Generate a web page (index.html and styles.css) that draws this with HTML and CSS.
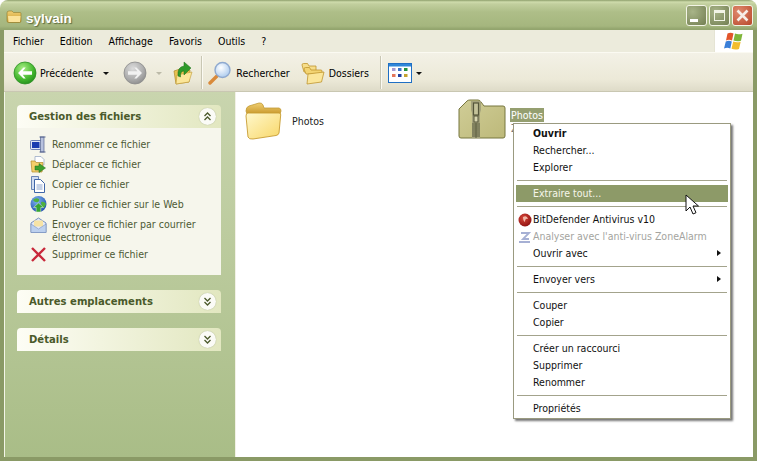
FILE: index.html
```html
<!DOCTYPE html>
<html lang="fr">
<head>
<meta charset="utf-8">
<title>sylvain</title>
<link rel="stylesheet" href="styles.css">
</head>
<body>
<svg class="defs" width="0" height="0" aria-hidden="true">
  <defs>
    <linearGradient id="fold" x1="0" y1="0" x2="1" y2="1"><stop offset="0" stop-color="#fff8cc"/><stop offset="1" stop-color="#f8d768"/></linearGradient>
    <linearGradient id="foldb" x1="0" y1="0" x2="0" y2="1"><stop offset="0" stop-color="#f0cf72"/><stop offset="1" stop-color="#c9992c"/></linearGradient>
    <linearGradient id="zipf" x1="0" y1="0" x2="1" y2="1"><stop offset="0" stop-color="#d0cd97"/><stop offset="1" stop-color="#bdb97a"/></linearGradient>
    <radialGradient id="gbtn" cx=".4" cy=".3" r=".8"><stop offset="0" stop-color="#a8ee84"/><stop offset=".6" stop-color="#45b82f"/><stop offset="1" stop-color="#1c8518"/></radialGradient>
    <radialGradient id="gray" cx=".4" cy=".3" r=".8"><stop offset="0" stop-color="#dcdcdc"/><stop offset=".6" stop-color="#adadad"/><stop offset="1" stop-color="#858585"/></radialGradient>
    <radialGradient id="lens" cx=".4" cy=".35" r=".7"><stop offset="0" stop-color="#ffffff"/><stop offset="1" stop-color="#a9c9ee"/></radialGradient>
    <radialGradient id="globe" cx=".4" cy=".3" r=".8"><stop offset="0" stop-color="#7fb4f0"/><stop offset="1" stop-color="#1746a8"/></radialGradient>
    <radialGradient id="bd" cx=".4" cy=".35" r=".7"><stop offset="0" stop-color="#d8473a"/><stop offset="1" stop-color="#8c0f0f"/></radialGradient>
  </defs>
</svg>
<div class="window">
  <header class="titlebar">
    <svg class="title-icon" width="16" height="14" viewBox="0 0 16 14"><path d="M1 3q0-2 2-2h3l1.500 1.500H14q1 0 1 1V11q0 1.500-1.500 1.500H3Q1 12.500 1 11z" fill="url(#foldb)" stroke="#8f7a2c" stroke-width=".6"/><path d="M2 6h12.500L14 12H2.500z" fill="#fbe39a"/></svg>
    <span class="title-text">sylvain</span>
    <div class="caption-buttons">
      <span class="cap-btn"><i class="cap-min"></i></span>
      <span class="cap-btn"><i class="cap-max"></i></span>
      <span class="cap-btn cap-close"><svg width="15" height="15" viewBox="0 0 15 15"><path d="M2.500 2.500l10 10M12.500 2.500l-10 10" stroke="#f6eee6" stroke-width="2.600" fill="none"/></svg></span>
    </div>
  </header>
  <div class="frame">
    <nav class="menubar">
      <span>Fichier</span><span>Edition</span><span>Affichage</span><span>Favoris</span><span>Outils</span><span>?</span>
      <div class="logo-box">
        <svg width="22" height="20" viewBox="0 0 22 20"><path d="M4.500 2.500q3-1.500 6 0L9 9.500q-3-1.500-6 0z" fill="#e2552b"/><path d="M12 2.500q3 1.500 7.500.3L18 9.800q-4 1.200-7.500-.3z" fill="#7fb63a"/><path d="M2.800 10.500q3-1.500 6 0L7.300 17.500q-3-1.500-6.300 0z" fill="#3a7fd8"/><path d="M10.200 10.500q3.500 1.500 7.500.3L16 18q-4 1.200-7.500-.3z" fill="#f3bd2e"/></svg>
      </div>
    </nav>
    <div class="toolbar">
      <span class="tool tool-back">
        <svg width="24" height="24" viewBox="0 0 24 24"><circle cx="12" cy="12" r="11" fill="url(#gbtn)" stroke="#2d8f24" stroke-width=".8"/><path d="M5 12l5.500-5.500 2.200 0-3 3.700H19v3.600H9.700l3 3.700-2.200 0z" fill="#fff"/></svg>
        <span>Précédente</span>
        <i class="caret"></i>
      </span>
      <span class="tool tool-fwd">
        <svg width="24" height="24" viewBox="0 0 24 24"><circle cx="12" cy="12" r="11" fill="url(#gray)" stroke="#8a8a8a" stroke-width=".8"/><path d="M19 12l-5.500-5.500-2.200 0 3 3.700H5v3.600h9.300l-3 3.700 2.200 0z" fill="#f2f2f2"/></svg>
        <i class="caret caret-off"></i>
      </span>
      <span class="tool tool-up">
        <svg width="20" height="24" viewBox="0 0 20 24"><path d="M1 10l6-2v2l10-1-1 12-13 2z" fill="#e9c150" stroke="#b08a2a" stroke-width=".7"/><path d="M4 14l15-3-3 10-13 2z" fill="#fbe69a" stroke="#c09a35" stroke-width=".6"/><path d="M5 15Q4 6 11 5V1l7 6-7 7v-4q-4 0-3.500 6z" fill="#2f9a2a" stroke="#1f6f1a" stroke-width=".5"/></svg>
      </span>
      <i class="tool-sep"></i>
      <span class="tool tool-search">
        <svg width="24" height="24" viewBox="0 0 24 24"><path d="M9.500 14.500L2 22" stroke="#d98a3a" stroke-width="3.400" stroke-linecap="round"/><circle cx="14.500" cy="9" r="7.500" fill="url(#lens)" stroke="#8fa9cf" stroke-width="1.400"/></svg>
        <span>Rechercher</span>
      </span>
      <span class="tool tool-folders">
        <svg width="24" height="23" viewBox="0 0 24 23"><path d="M1 3q0-1.500 1.500-1.500h4L8 4h7v6H3z" fill="#f6dd8a" stroke="#bf962e" stroke-width=".8"/><path d="M3 7q0-1.500 1.500-1.500h4L10 8h10q1 0 1 1v3H5z" fill="#f3d472" stroke="#bf962e" stroke-width=".8"/><path d="M7 12l16-2-2.500 10L6 22z" fill="#fbe69a" stroke="#bf962e" stroke-width=".8"/></svg>
        <span>Dossiers</span>
      </span>
      <i class="tool-sep tool-sep-2"></i>
      <span class="tool tool-views">
        <svg width="24" height="20" viewBox="0 0 24 20"><rect x=".5" y=".5" width="23" height="19" fill="#fff" stroke="#1f6fc4"/><rect x="1" y="1" width="22" height="2.500" fill="#2f86d8"/><g><rect x="4" y="5" width="3.500" height="3" fill="#a79ad0"/><rect x="10" y="5" width="3.500" height="3" fill="#3d74c8"/><rect x="16" y="5" width="3.500" height="3" fill="#22923a"/><rect x="4" y="11" width="3.500" height="3" fill="#e4775a"/><rect x="10" y="11" width="3.500" height="3" fill="#1f3fa0"/><rect x="16" y="11" width="3.500" height="3" fill="#c6a32f"/></g></svg>
        <i class="caret"></i>
      </span>
    </div>
    <div class="main">
      <aside class="sidebar">
        <section class="panel">
          <div class="panel-head"><h2>Gestion des fichiers</h2><span class="chev"><svg width="9" height="9" viewBox="0 0 9 9"><path d="M1.500 4l3-3 3 3M1.500 8l3-3 3 3" fill="none" stroke="#4c5a2c" stroke-width="1.300"/></svg></span></div>
          <ul class="panel-body">
            <li><svg width="17" height="17" viewBox="0 0 17 17"><rect x=".5" y="4.500" width="13" height="9" rx="1" fill="#dfe6f4" stroke="#6a7fb5"/><rect x="2" y="6" width="7.500" height="6" fill="#1a3db0"/><rect x="10.500" y="1" width="3.500" height="15" fill="#b8c2de" stroke="#56658f" stroke-width=".7"/><path d="M9.500 1h6M9.500 16h6" stroke="#56658f" stroke-width="1.200"/></svg><span>Renommer ce fichier</span></li>
            <li><svg width="17" height="17" viewBox="0 0 17 17"><path d="M5 .5h6l3 3V9H5z" fill="#fff" stroke="#8ea0c0" stroke-width=".7"/><path d="M1 5h4l1 1.500h7L12 16H2z" fill="#f4cf6a" stroke="#b08a2a" stroke-width=".7"/><path d="M5 10h4V7.500l6.500 4.500L9 16.500V14H5z" fill="#3ea02e" stroke="#1f6f1a" stroke-width=".5"/></svg><span>Déplacer ce fichier</span></li>
            <li><svg width="17" height="17" viewBox="0 0 17 17"><path d="M1.500 .5h7v13h-7z" fill="#cfdcf0" stroke="#6b86b5"/><path d="M4.500 3.500h6l4 4v9h-10z" fill="#fff" stroke="#3f66a8"/><path d="M6.500 9h6M6.500 11h6M6.500 13h6" stroke="#8aa3cc"/></svg><span>Copier ce fichier</span></li>
            <li><svg width="17" height="17" viewBox="0 0 17 17"><circle cx="8.500" cy="8" r="8" fill="url(#globe)"/><path d="M3 4q3-3 6-1 1 2-1 3-3 1-5-2zM11 6q3-1 5 2-1 3-3 4-2-2-2-6z" fill="#4fb03f"/><path d="M8.500 7l5 4.500h-2.700V16H6.200v-4.500H3.500z" fill="#36a532" stroke="#e8f4e0" stroke-width=".5"/></svg><span>Publier ce fichier sur le Web</span></li>
            <li class="li-wrap"><svg width="17" height="17" viewBox="0 0 17 17"><path d="M1 6l7.500-5L16 6v9.500H1z" fill="#e3e9f6" stroke="#7890bd"/><path d="M4 3.500h9v6H4z" fill="#f6e3a5"/><path d="M1 7l7.500 5L16 7v8.500H1z" fill="#bcd0ee" stroke="#7890bd" stroke-width=".6"/></svg><span>Envoyer ce fichier par courrier électronique</span></li>
            <li><svg width="17" height="17" viewBox="0 0 17 17"><path d="M2 2l13 13M15 2L2 15" stroke="#c8283a" stroke-width="2.400" fill="none"/></svg><span>Supprimer ce fichier</span></li>
          </ul>
        </section>
        <section class="panel">
          <div class="panel-head"><h2>Autres emplacements</h2><span class="chev"><svg width="9" height="9" viewBox="0 0 9 9"><path d="M1.500 1l3 3 3-3M1.500 5l3 3 3-3" fill="none" stroke="#4c5a2c" stroke-width="1.300"/></svg></span></div>
        </section>
        <section class="panel">
          <div class="panel-head"><h2>Détails</h2><span class="chev"><svg width="9" height="9" viewBox="0 0 9 9"><path d="M1.500 1l3 3 3-3M1.500 5l3 3 3-3" fill="none" stroke="#4c5a2c" stroke-width="1.300"/></svg></span></div>
        </section>
      </aside>
      <section class="files">
        <div class="file">
          <svg width="38" height="38" viewBox="0 0 38 38"><path d="M1 9q0-4 3-5l10-3q3-.5 4 2l1 3 15 0q2 .3 2 3l-1 3H2z" fill="url(#foldb)" stroke="#c29a35" stroke-width=".8"/><path d="M3 11h31q2 0 1.700 2L34 31q-.4 2-3 2.500L8 37q-4 .5-5-2L1 14q0-3 2-3z" fill="url(#fold)" stroke="#c79c32" stroke-width=".9"/></svg>
          <span class="file-name">Photos</span>
        </div>
        <div class="file file-zip">
          <svg width="48" height="41" viewBox="0 0 48 41"><path d="M1 10l8-8q1-1 3-1h8q2 0 3 2l3 4h19q2 0 2 2v28q0 2-2 2H3q-2 0-2-2z" fill="url(#zipf)" stroke="#77763f"/><path d="M13 2h10v9l-1 3v25h-8V14l-1-3z" fill="#a5a37c"/><rect x="15.500" y="4" width="5" height="12" fill="#c4c29a" stroke="#55553a" stroke-width="1.200"/><rect x="16" y="17" width="4" height="6" fill="#d8d6b0" stroke="#55553a"/><path d="M14 25h8M14 27h8M14 29h8M14 31h8M14 33h8M14 35h8M14 37h8" stroke="#5f6043"/><path d="M18 24v15" stroke="#5f6043"/></svg>
          <div class="zip-label">
            <span class="file-name file-selected">Photos</span>
            <span class="file-type">Zip</span>
          </div>
        </div>
        <ul class="context-menu">
          <li class="cm-bold">Ouvrir</li>
          <li>Rechercher...</li>
          <li>Explorer</li>
          <li class="cm-sep"></li>
          <li class="cm-hi">Extraire tout...</li>
          <li class="cm-sep"></li>
          <li class="cm-ic"><svg width="14" height="14" viewBox="0 0 14 14"><circle cx="7" cy="7" r="6.500" fill="url(#bd)"/><path d="M5 4q4-2 5 2-3-1-3 3-2-1-2-5z" fill="#f0b8a8"/></svg>BitDefender Antivirus v10</li>
          <li class="cm-ic cm-dis"><svg width="14" height="14" viewBox="0 0 14 14"><path d="M3 3h8L5 9h6M1 12h11" fill="none" stroke="#a6b0d4" stroke-width="1.800"/></svg>Analyser avec l'anti-virus ZoneAlarm</li>
          <li class="cm-sub">Ouvrir avec</li>
          <li class="cm-sep"></li>
          <li class="cm-sub">Envoyer vers</li>
          <li class="cm-sep"></li>
          <li>Couper</li>
          <li>Copier</li>
          <li class="cm-sep"></li>
          <li>Créer un raccourci</li>
          <li>Supprimer</li>
          <li>Renommer</li>
          <li class="cm-sep"></li>
          <li>Propriétés</li>
        </ul>
        <svg class="cursor" width="14" height="22" viewBox="0 0 14 22"><path d="M1 1v16l4-4 3 7 3-1.300-3-6.700h5.500z" fill="#fff" stroke="#111" stroke-width="1"/></svg>
      </section>
    </div>
  </div>
</div>
</body>
</html>
```

FILE: styles.css
```css
* { box-sizing: border-box; }
html, body { margin: 0; padding: 0; background: #fff; }
body { font: 10.5px/13px "DejaVu Sans Condensed", "Liberation Sans", sans-serif; color: #000; overflow: hidden; }
.defs { position: absolute; }
ul { list-style: none; margin: 0; padding: 0; }

.window { width: 757px; height: 461px; display: flex; flex-direction: column; }
.titlebar {
  height: 30px; flex: none; display: flex; align-items: center; padding: 2px 4px 0 6px;
  border-radius: 8px 8px 0 0;
  background: linear-gradient(#8e9f6c 0, #cfdcac 2px, #c2cf9e 4px, #aebe88 12px, #a5b67e 26px, #93a56e 29px);
}
.title-icon { margin: 2px 4px 0 0; }
.title-text { font: bold 13.500px/16px "Liberation Sans", sans-serif; color: #fff; text-shadow: 1px 1px 1px #5d6b3e; margin-top: 5px; }
.caption-buttons { margin-left: auto; display: flex; gap: 2px; margin-top: -1px; }
.cap-btn {
  width: 21px; height: 21px; border: 1px solid #f2f4e6; border-radius: 3px;
  background: radial-gradient(circle at 30% 30%, #a8b488, #737f52);
  display: flex; align-items: center; justify-content: center; position: relative;
}
.cap-min { width: 8px; height: 3px; background: #fff; align-self: flex-end; margin: 0 6px 3px 0; }
.cap-max { width: 11px; height: 11px; border: 1px solid #f2f4e6; border-top-width: 3px; }
.cap-close { background: radial-gradient(circle at 30% 30%, #e08a6e, #b8482a); }

.frame {
  flex: 1; min-height: 0; display: flex; flex-direction: column;
  border: solid #8a9a66; border-width: 0 4px 4px;
  background: #ecebdc;
}
.menubar {
  height: 23px; flex: none; display: flex; align-items: center; gap: 16px; padding-left: 9px;
  background: #ecebdc; border-bottom: 1px solid #fbfaf2; position: relative;
}
.logo-box {
  position: absolute; right: 0; top: 0; width: 39px; height: 22px; background: #fff;
  display: flex; align-items: center; justify-content: center; border-left: 1px solid #e5e4d4;
}
.toolbar {
  height: 39px; flex: none; display: flex; align-items: center; padding: 2px 0 0 9px;
  background: linear-gradient(#f3f1e6, #ece9d8 70%, #dedbc8);
  border-bottom: 1px solid #c9c7b2;
}
.tool { display: flex; align-items: center; }
.tool-back span { margin-left: 3px; }
.caret { width: 0; height: 0; border: solid transparent; border-width: 3px 3px 0; border-top-color: #111; }
.tool-back .caret { margin-left: 10px; }
.tool-fwd { margin-left: 14px; }
.tool-fwd .caret { margin-left: 9px; }
.caret-off { border-top-color: #bcbaa8; }
.tool-up { margin-left: 11px; }
.tool-sep { width: 1px; height: 33px; margin: -2px 6px 0 8px; background: #c9c7b4; box-shadow: 1px 0 #fbfaf3; }
.tool-search span { margin-left: 4px; }
.tool-folders { margin-left: 11px; }
.tool-folders span { margin-left: 4px; }
.tool-sep-2 { margin-left: 11px; margin-right: 7px; }
.tool-views .caret { margin-left: 4px; }

.main { flex: 1; min-height: 0; display: flex; }
.sidebar {
  width: 231px; flex: none; padding: 13px 14px 0 12px;
  background: linear-gradient(#c9d5ae, #a9bd87);
  display: flex; flex-direction: column; gap: 15px;
  border-left: 1px solid #f3f5e8;
}
.panel-head {
  height: 23px; display: flex; align-items: center; justify-content: space-between; padding: 0 5px 0 12px;
  border-radius: 4px 4px 0 0;
  background: linear-gradient(90deg, #fdfdf5, #e2e7c0);
}
.panel-head h2 { margin: 0; font: bold 11.200px/14px "DejaVu Sans Condensed", "Liberation Sans", sans-serif; color: #4a5a2a; }
.chev { width: 17px; height: 17px; border-radius: 50%; background: #fbfbf6; box-shadow: 0 0 1px #9aa57d; display: flex; align-items: center; justify-content: center; }
.panel-body { background: #f6f6ec; height: 147px; padding: 6px 4px 0 13px; display: flex; flex-direction: column; }
.panel-body li { display: flex; align-items: center; gap: 5px; height: 20px; color: #4d5a35; flex: none; }
.panel-body svg { flex: none; }
.panel-body .li-wrap { height: 30px; align-items: flex-start; }
.panel-body .li-wrap svg { margin-top: 3px; }
.panel-body .li-wrap span { width: 150px; margin-top: 4px; }

.files { flex: 1; background: #fff; position: relative; display: flex; padding: 7px 0 0 9px; border-left: 1px solid #f2f1e6; min-width: 0; }
.file { display: flex; align-items: center; gap: 9px; height: 42px; width: 213px; margin-top: 1px; color: #222; }
.file-zip { gap: 4px; width: auto; margin-top: 0; align-items: flex-start; }
.file-name { line-height: 14px; }
.zip-label { display: flex; flex-direction: column; align-items: flex-start; margin-top: 9px; }
.file-selected { background: #959f70; color: #fff; padding: 0 1px; }
.file-type { color: #777; padding-left: 1px; line-height: 12px; width: 3px; overflow: hidden; white-space: nowrap; }

.context-menu {
  position: absolute; left: 277px; top: 31px; width: 218px; z-index: 1;
  background: #fff; border: 1px solid #9a9a80; padding: 1px 2px;
  box-shadow: 2px 2px 2px #777;
}
.context-menu li { height: 17px; line-height: 17px; padding-left: 17px; color: #111; position: relative; }
.context-menu .cm-sep { height: 9px; padding: 0; }
.context-menu .cm-sep::before { content: ""; display: block; position: absolute; left: 1px; right: 1px; top: 4px; height: 1px; background: #a3a38c; }
.context-menu .cm-bold { font-weight: bold; }
.context-menu .cm-hi { background: #8d9a68; color: #f6f6ea; }
.context-menu .cm-ic { padding-left: 2px; display: flex; align-items: center; gap: 1px; }
.context-menu .cm-dis { color: #a4a4a0; }
.context-menu .cm-sub::after { content: ""; position: absolute; right: 7px; top: 5px; border: solid transparent; border-width: 3.500px 0 3.500px 4px; border-left-color: #111; }
.cursor { position: absolute; left: 449px; top: 102px; z-index: 2; }
```
